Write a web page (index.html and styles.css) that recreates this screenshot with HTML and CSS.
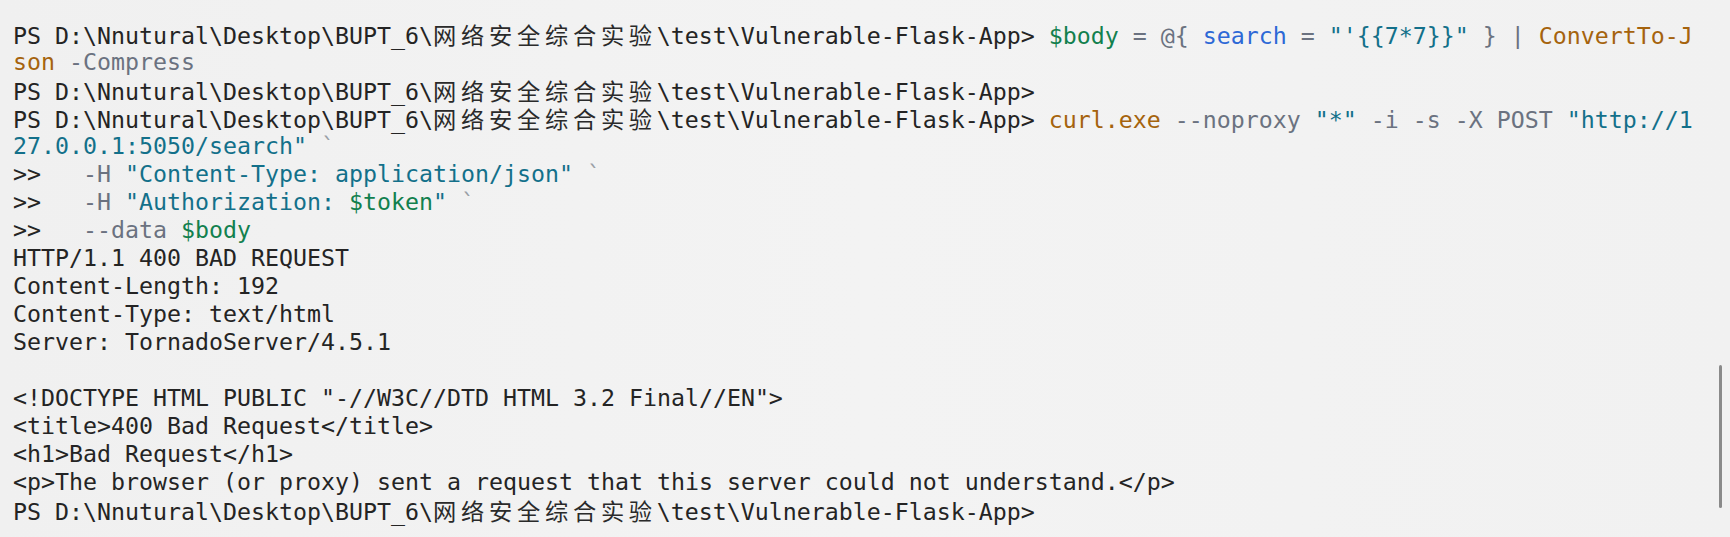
FILE: index.html
```html
<!DOCTYPE html>
<html lang="zh-CN">
<head>
<meta charset="utf-8">
<title>PowerShell</title>
<link rel="stylesheet" href="styles.css">
</head>
<body>
<main class="term">
  <div class="output">
    <div class="ln">PS D:\Nnutural\Desktop\BUPT_6\<span class="cjk">网络安全综合实验</span>\test\Vulnerable-Flask-App&gt; <span class="var">$body</span> <span class="op">=</span> <span class="op">@{</span> <span class="key">search</span> <span class="op">=</span> <span class="str">"'{{7*7}}"</span> <span class="op">}</span> <span class="op">|</span> <span class="cmd">ConvertTo-J</span></div>
    <div class="ln"><span class="cmd">son</span> <span class="op">-Compress</span></div>
    <div class="ln">PS D:\Nnutural\Desktop\BUPT_6\<span class="cjk">网络安全综合实验</span>\test\Vulnerable-Flask-App&gt;</div>
    <div class="ln">PS D:\Nnutural\Desktop\BUPT_6\<span class="cjk">网络安全综合实验</span>\test\Vulnerable-Flask-App&gt; <span class="cmd">curl.exe</span> <span class="op">--noproxy</span> <span class="str">"*"</span> <span class="op">-i</span> <span class="op">-s</span> <span class="op">-X</span> <span class="op">POST</span> <span class="str">"http://1</span></div>
    <div class="ln"><span class="str">27.0.0.1:5050/search"</span> <span class="tick">`</span></div>
    <div class="ln">&gt;&gt;   <span class="op">-H</span> <span class="str">"Content-Type: application/json"</span> <span class="tick">`</span></div>
    <div class="ln">&gt;&gt;   <span class="op">-H</span> <span class="str">"Authorization: <span class="var">$token</span>"</span> <span class="tick">`</span></div>
    <div class="ln">&gt;&gt;   <span class="op">--data</span> <span class="var">$body</span></div>
    <div class="ln">HTTP/1.1 400 BAD REQUEST</div>
    <div class="ln">Content-Length: 192</div>
    <div class="ln">Content-Type: text/html</div>
    <div class="ln">Server: TornadoServer/4.5.1</div>
    <div class="ln"> </div>
    <div class="ln">&lt;!DOCTYPE HTML PUBLIC "-//W3C//DTD HTML 3.2 Final//EN"&gt;</div>
    <div class="ln">&lt;title&gt;400 Bad Request&lt;/title&gt;</div>
    <div class="ln">&lt;h1&gt;Bad Request&lt;/h1&gt;</div>
    <div class="ln">&lt;p&gt;The browser (or proxy) sent a request that this server could not understand.&lt;/p&gt;</div>
    <div class="ln">PS D:\Nnutural\Desktop\BUPT_6\<span class="cjk">网络安全综合实验</span>\test\Vulnerable-Flask-App&gt;</div>
  </div>
  <div class="scroll">
    <div class="thumb"></div>
  </div>
</main>
</body>
</html>
```

FILE: styles.css
```css
html, body {
  margin: 0;
  padding: 0;
  height: 100%;
  background: #f1f1f1;
}

.term {
  display: flex;
  height: 537px;
  box-sizing: border-box;
  background: linear-gradient(90deg, #f0f0f0 0%, #f3f3f3 50%, #f1f1f1 100%);
  border-bottom-right-radius: 10px;
  overflow: hidden;
}

.output {
  flex: 1;
  padding: 20px 0 0 13px;
  font-family: "DejaVu Sans Mono", "Liberation Mono", "Noto Sans CJK SC", monospace;
  font-size: 23.26px;
  line-height: 28px;
  color: #242424;
}

.ln {
  white-space: pre;
  height: 28px;
}

.cjk {
  font-family: "Noto Sans CJK SC", "Noto Sans CJK JP", sans-serif;
  letter-spacing: 4.74px;
  font-size: 23.26px;
  color: #2a2a2a;
}

.var { color: #12804e; }
.key { color: #2d68d6; }
.str { color: #13708a; }
.cmd { color: #a5630d; }
.op { color: #6b7280; }
.tick { color: #9aa0a6; }

.scroll {
  width: 30px;
  display: flex;
  flex-direction: column;
  padding-top: 365px;
}

.thumb {
  margin-left: 19px;
  width: 3px;
  height: 143px;
  border-radius: 2px;
  background: #8a8a8a;
}
```
